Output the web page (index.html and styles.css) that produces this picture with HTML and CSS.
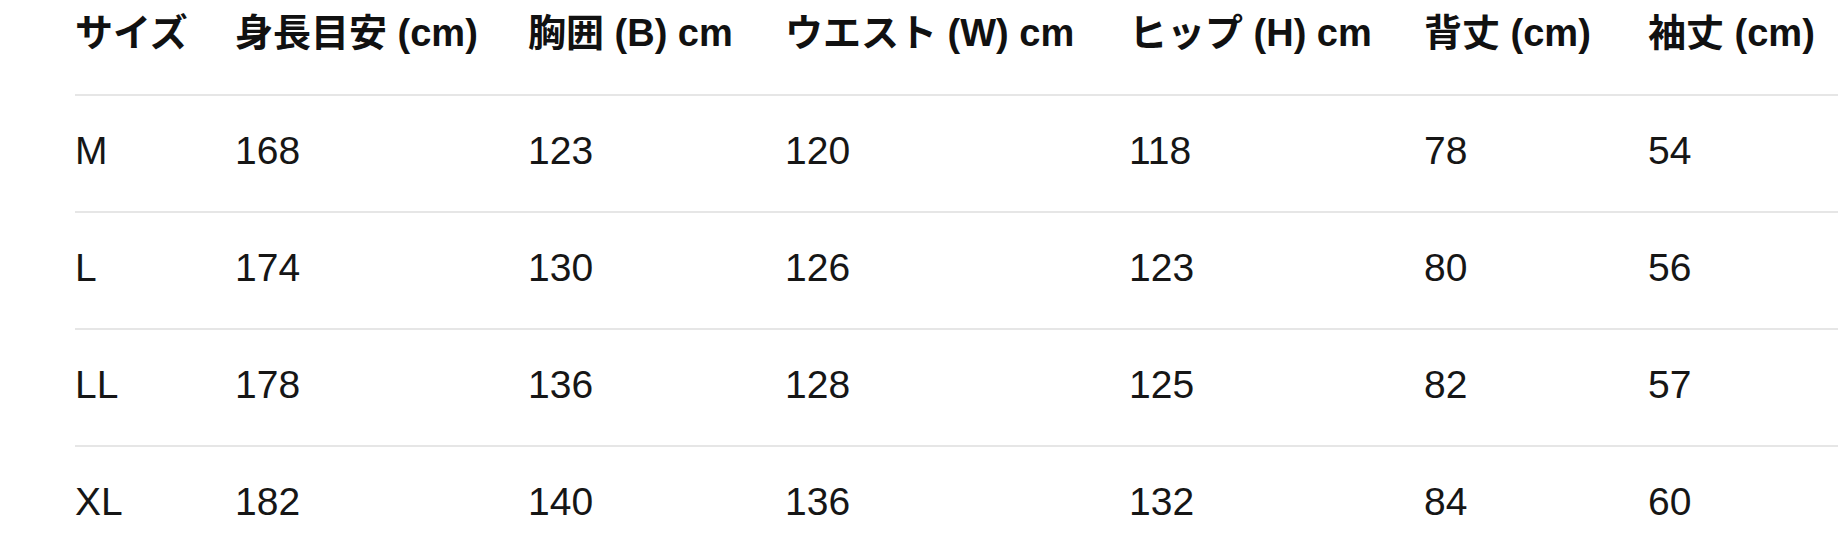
FILE: index.html
```html
<!DOCTYPE html>
<html lang="ja">
<head>
<meta charset="utf-8">
<title>サイズ表</title>
<link rel="stylesheet" href="styles.css">
</head>
<body>
<div class="size-chart">
  <table class="size-table">
    <thead>
      <tr>
        <th class="c-size">サイズ</th>
        <th class="c-height">身長目安 (cm)</th>
        <th class="c-chest">胸囲 (B) cm</th>
        <th class="c-waist">ウエスト (W) cm</th>
        <th class="c-hip">ヒップ (H) cm</th>
        <th class="c-back">背丈 (cm)</th>
        <th class="c-sleeve">袖丈 (cm)</th>
      </tr>
    </thead>
    <tbody>
      <tr><td>M</td><td>168</td><td>123</td><td>120</td><td>118</td><td>78</td><td>54</td></tr>
      <tr><td>L</td><td>174</td><td>130</td><td>126</td><td>123</td><td>80</td><td>56</td></tr>
      <tr><td>LL</td><td>178</td><td>136</td><td>128</td><td>125</td><td>82</td><td>57</td></tr>
      <tr><td>XL</td><td>182</td><td>140</td><td>136</td><td>132</td><td>84</td><td>60</td></tr>
    </tbody>
  </table>
</div>
</body>
</html>
```

FILE: styles.css
```css
html, body {
  margin: 0;
  padding: 0;
  background: #ffffff;
}

body {
  font-family: "Liberation Sans", "Noto Sans CJK JP", sans-serif;
  color: #111111;
}

.size-chart {
  width: 1838px;
  height: 536px;
  overflow: hidden;
  padding-left: 75px;
  box-sizing: border-box;
}

.size-table {
  border-collapse: separate;
  border-spacing: 0;
  table-layout: fixed;
  width: 1793px;
}

.size-table th,
.size-table td {
  text-align: left;
  padding: 0;
  line-height: 48px;
  white-space: nowrap;
  border-bottom: 2px solid #e6e6e6;
  vertical-align: top;
}

.size-table th {
  font-size: 38px;
  font-weight: 700;
  color: #111111;
  padding-top: 9px;
  padding-bottom: 37px;
}

.size-table td {
  font-size: 39px;
  font-weight: 400;
  color: #161616;
  padding-top: 31px;
  padding-bottom: 36px;
}

.c-size { width: 160px; }
.c-height { width: 293px; }
.c-chest { width: 257px; }
.c-waist { width: 344px; }
.c-hip { width: 295px; }
.c-back { width: 224px; }
.c-sleeve { width: 220px; }
```
